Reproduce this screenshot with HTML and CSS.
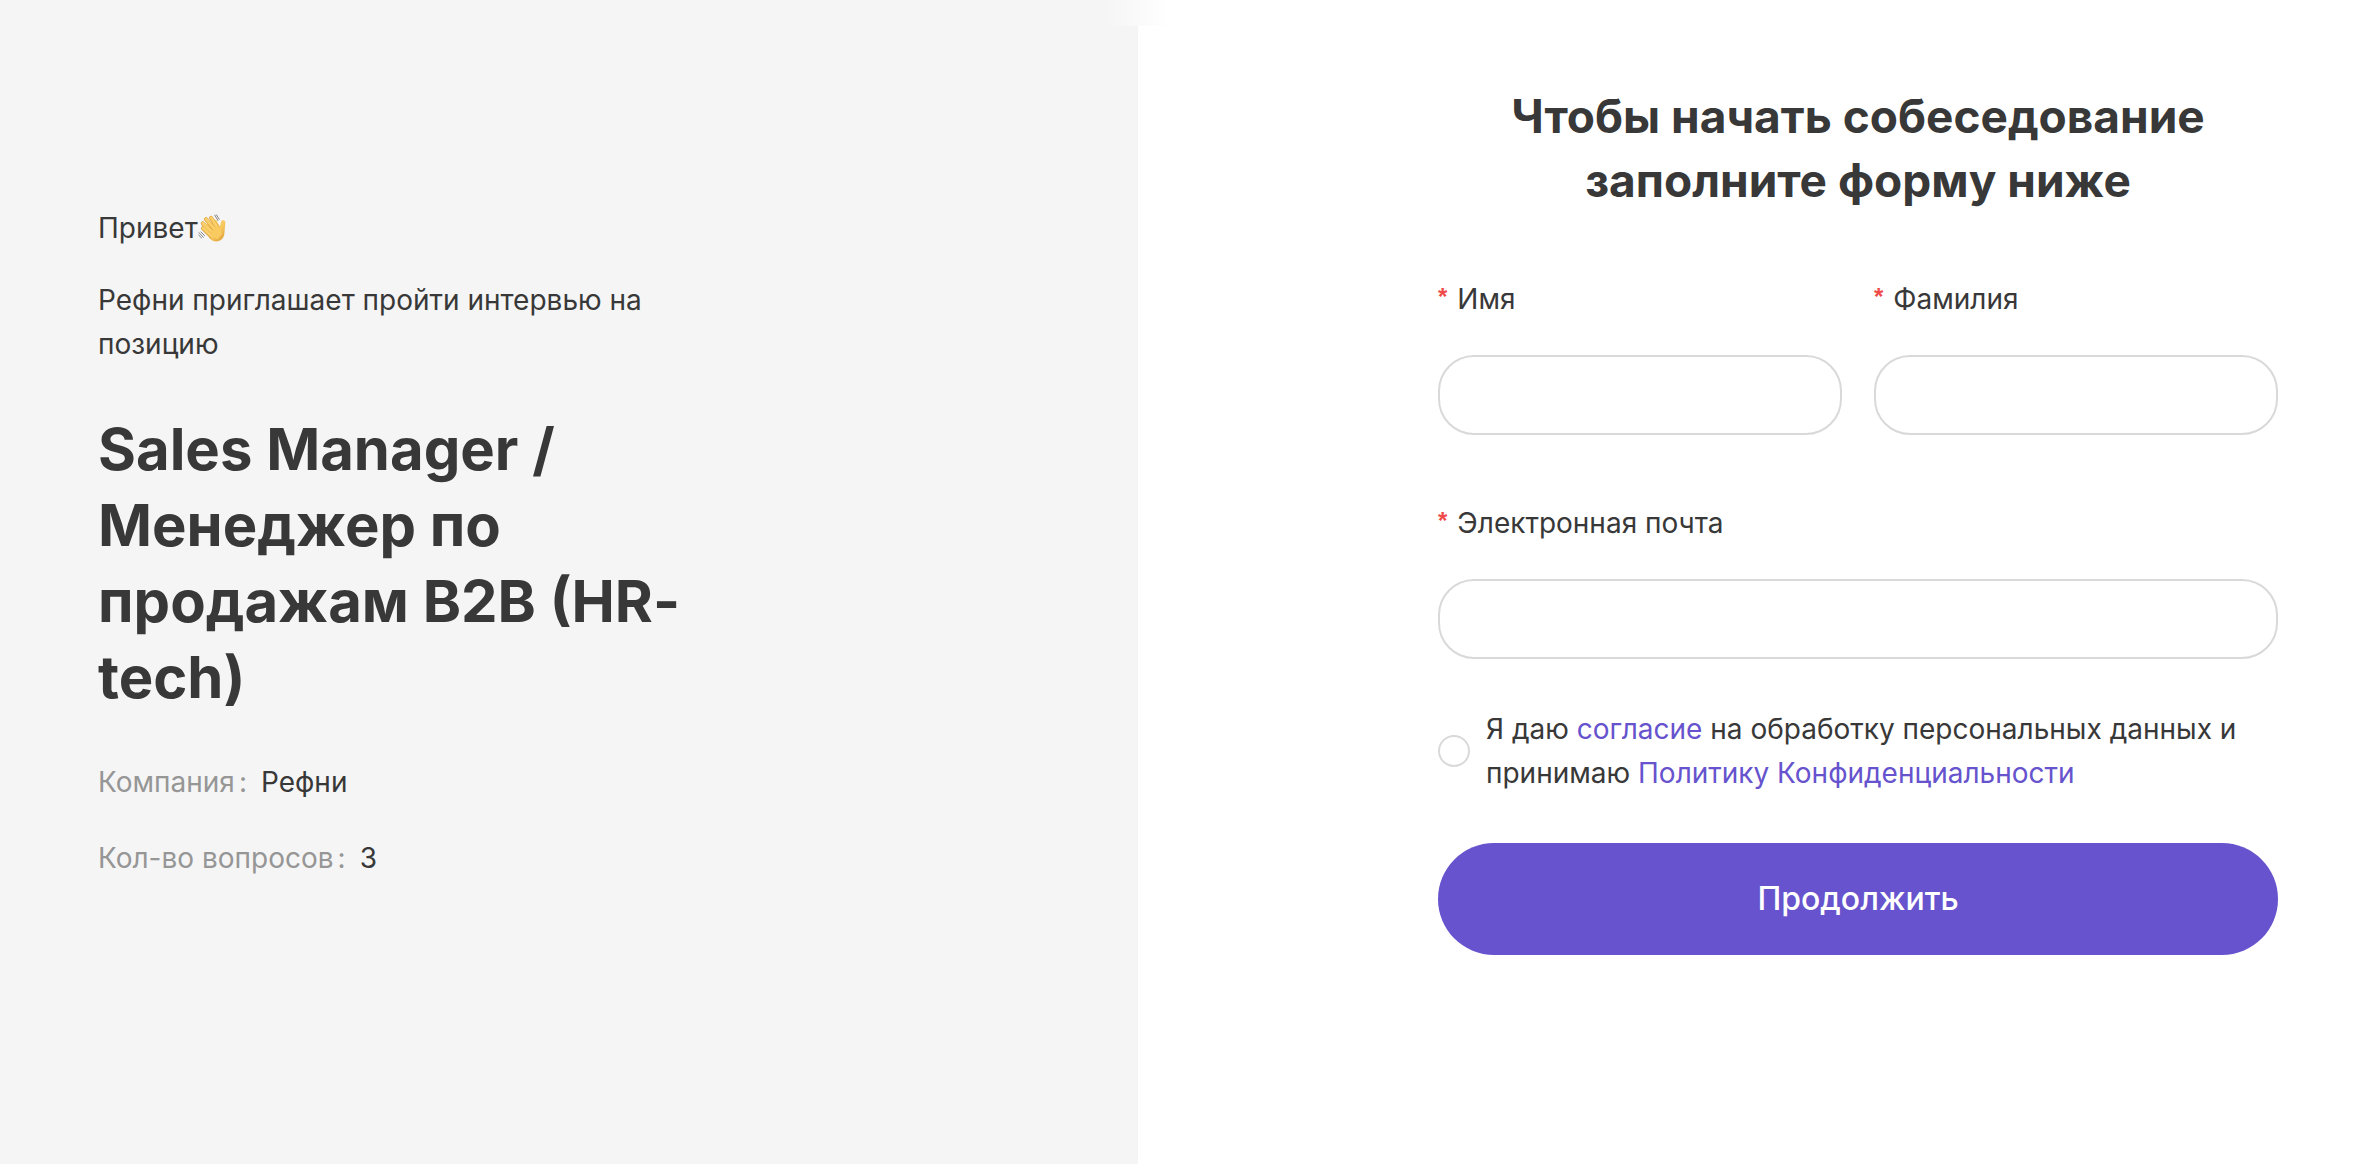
FILE: index.html
```
<!DOCTYPE html>
<html lang="ru">
<head>
    <meta charset="UTF-8">
    <meta name="viewport" content="width=device-width, initial-scale=1.0">
    <title>Рефни</title>
    <link rel="stylesheet" href="styles.css">
</head>
<body>

    <div class="page">
        <div class="seam"></div>

        <section class="intro">
            <div class="intro-content">
                <p class="greeting">Привет<svg class="wave" viewBox="0 0 28 28" role="img" aria-label="Машет рукой">
                        <defs>
                            <linearGradient id="skin" x1="0" y1="0" x2="1" y2="1">
                                <stop offset="0" stop-color="#ffdc7c"/>
                                <stop offset="0.6" stop-color="#f6c75d"/>
                                <stop offset="1" stop-color="#d9962f"/>
                            </linearGradient>
                        </defs>
                        <!-- palm with thumb -->
                        <path fill="url(#skin)" d="M6 15.5 L9 10 L18 5.5 L21.8 12.5 C22.6 10.8 22.6 8.8 23.2 7.4 C24 5.8 27.2 6 27.3 8.2 C27.5 10.6 26.7 14.6 26.5 18.4 C26.3 22 24.9 24.7 22.4 26.2 C18.6 28.3 14.6 27.6 11.8 24.4 Z"/>
                        <!-- fingers -->
                        <g fill="none" stroke="#d99c38" stroke-width="4" stroke-linecap="round">
                            <path d="M13.5 22.5 L5 14.2"/>
                            <path d="M14 18.6 L4.8 9.4"/>
                            <path d="M16.5 15.6 L8 5.2"/>
                            <path d="M19.5 13.6 L13 3.8"/>
                        </g>
                        <g fill="none" stroke="#fbd06a" stroke-width="3" stroke-linecap="round">
                            <path d="M14.5 22.8 L5.2 14.2"/>
                            <path d="M15 18.8 L5 9.4"/>
                            <path d="M17.5 16.2 L8.2 5.2"/>
                            <path d="M20 14.6 L13.2 3.8"/>
                        </g>
                        <path fill="#f8ca60" d="M13 18 L19 12.5 L22.5 14 L24 20 L20 25 L14.5 23.5 Z"/>
                        <!-- motion marks -->
                        <g fill="none" stroke="#858585" stroke-width="1" stroke-linecap="round">
                            <path d="M16.8 1.2 L20 6.6"/>
                            <path d="M18.4 0.8 L21.2 5.2"/>
                            <path d="M1 18.6 L5.4 23.4"/>
                            <path d="M3 18 L6.6 21.6"/>
                            <path d="M0.6 21 L3.6 24"/>
                        </g>
                    </svg></p>
                <p class="invite">Рефни приглашает пройти интервью на позицию</p>
                <h1 class="position">Sales Manager / Менеджер по продажам B2B (HR-tech)</h1>
                <dl class="details">
                    <div class="detail">
                        <dt>Компания<span class="colon">:</span></dt>
                        <dd>Рефни</dd>
                    </div>
                    <div class="detail">
                        <dt>Кол-во вопросов<span class="colon">:</span></dt>
                        <dd>3</dd>
                    </div>
                </dl>
            </div>
        </section>

        <main class="signup">
            <form class="form">
                <h2 class="form-title">Чтобы начать собеседование заполните форму ниже</h2>

                <div class="fields">
                    <div class="field">
                        <label for="first-name"><span class="required">*</span>Имя</label>
                        <input type="text" id="first-name" name="first-name" required>
                    </div>
                    <div class="field">
                        <label for="last-name"><span class="required">*</span>Фамилия</label>
                        <input type="text" id="last-name" name="last-name" required>
                    </div>
                    <div class="field field-wide">
                        <label for="email"><span class="required">*</span>Электронная почта</label>
                        <input type="email" id="email" name="email" required>
                    </div>
                </div>

                <div class="consent">
                    <input type="checkbox" id="consent" name="consent" required>
                    <label for="consent">Я даю <a href="#agreement">согласие</a> на обработку персональных данных и принимаю <a href="#privacy">Политику Конфиденциальности</a></label>
                </div>

                <button type="submit" class="submit">Продолжить</button>
            </form>
        </main>
    </div>

</body>
</html>
```
FILE: styles.css
```
* {
    box-sizing: border-box;
}
body {
    margin: 0;
    font-family: Inter, "Liberation Sans", sans-serif;
    font-size: 28px;
    line-height: 44px;
    color: #383838;
    background-color: #fff;
}
h1, h2, p, dl, dd {
    margin: 0;
}
a {
    color: #6653cd;
    text-decoration: none;
}
.page {
    position: relative;
    display: grid;
    grid-template-columns: 1138fr 1222fr;
    min-height: 100vh;
}
/* soft transition over the top of the split */
.seam {
    position: absolute;
    top: 0;
    left: 1106px;
    width: 64px;
    height: 26px;
    background: linear-gradient(to right, #f5f5f5, #fff);
}

/* Left side */
.intro {
    padding: 206px 98px 98px;
    background-color: #f5f5f5;
}
.intro-content {
    max-width: 600px;
}
.wave {
    width: 28px;
    height: 28px;
    vertical-align: -4px;
}
.invite {
    margin-top: 28px;
}
.position {
    margin-top: 45px;
    font-size: 58px;
    line-height: 76px;
    font-weight: 700;
}
.details {
    display: flex;
    flex-direction: column;
    gap: 32px;
    margin-top: 45px;
}
.detail {
    display: flex;
    gap: 14px;
}
.detail dt {
    color: #969696;
}
.colon {
    margin-left: 4px;
}

/* Right side */
.signup {
    display: flex;
    justify-content: flex-end;
    padding: 84px 82px;
}
.form {
    width: 100%;
    max-width: 840px;
}
.form-title {
    max-width: 760px;
    margin: 0 auto;
    font-size: 46px;
    line-height: 64px;
    font-weight: 700;
    text-align: center;
}
.fields {
    display: grid;
    grid-template-columns: 1fr 1fr;
    gap: 66px 32px;
    margin-top: 65px;
}
.field-wide {
    grid-column: 1 / -1;
}
.field label {
    display: block;
    margin-bottom: 34px;
}
.field input {
    display: block;
    width: 100%;
    height: 80px;
    padding: 0 32px;
    font: inherit;
    color: inherit;
    background-color: #fff;
    border: 2px solid #d9d9d9;
    border-radius: 36px;
}
.required {
    margin-right: 10px;
    font-family: "Liberation Sans", sans-serif;
    font-size: 24px;
    font-weight: 700;
    line-height: 1;
    vertical-align: 4px;
    color: #f04b4b;
}
.consent {
    display: flex;
    align-items: center;
    gap: 16px;
    margin-top: 48px;
}
.consent input {
    flex: none;
    appearance: none;
    width: 32px;
    height: 32px;
    margin: 0;
    background-color: #fff;
    border: 2px solid #d9d9d9;
    border-radius: 50%;
    cursor: pointer;
}
.consent input:checked {
    background-color: #6653cd;
    border-color: #6653cd;
}
.submit {
    display: block;
    width: 100%;
    height: 112px;
    margin-top: 48px;
    font: inherit;
    font-size: 32px;
    font-weight: 500;
    color: #fff;
    background-color: #6653cd;
    border: none;
    border-radius: 56px;
    cursor: pointer;
}
.submit:hover {
    background-color: #7867d6;
}
```
